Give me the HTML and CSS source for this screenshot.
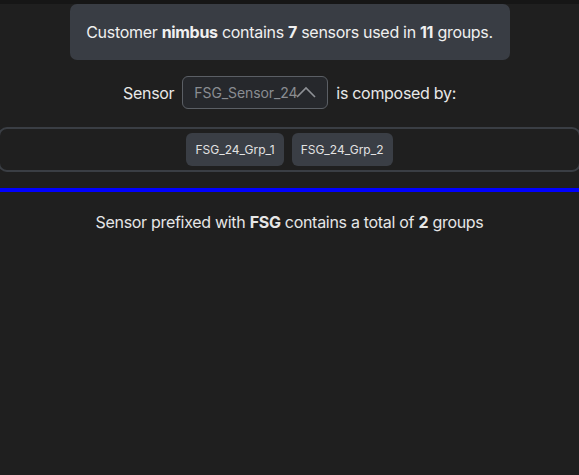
FILE: index.html
```html
<!DOCTYPE html>
<html>
<head>
<meta charset="utf-8">
<link rel="stylesheet" href="styles.css">
</head>
<body>
<div class="topband"></div>
<main class="page">
  <div class="summary"><span>Customer <b>nimbus</b> contains <b>7</b> sensors used in <b>11</b> groups.</span></div>
  <div class="sensor-row">
    <span>Sensor</span>
    <div class="select">
      <span class="select-text">FSG_Sensor_24</span>
      <svg class="chev" width="20" height="12" viewBox="0 0 20 12"><path d="M1 11 L10 2 L19 11" fill="none" stroke="#8e9196" stroke-width="1.6"/></svg>
    </div>
    <span>is composed by:</span>
  </div>
  <div class="groups">
    <span class="chip">FSG_24_Grp_1</span>
    <span class="chip">FSG_24_Grp_2</span>
  </div>
  <div class="divider"></div>
  <p class="total">Sensor prefixed with <b>FSG</b> contains a total of <b>2</b> groups</p>
</main>
</body>
</html>
```
FILE: styles.css
```css
html, body {
  margin: 0;
  padding: 0;
  background: #1f1f1f;
  color: #e6e6e6;
  font-family: Inter, "Noto Sans", sans-serif;
  font-size: 16px;
  letter-spacing: -0.3px;
  overflow: hidden;
}
.topband {
  height: 4px;
  background: #161616;
}
.page {
  display: flex;
  flex-direction: column;
  align-items: center;
}
.summary {
  width: 440px;
  height: 56px;
  box-sizing: border-box;
  background: #393d44;
  border-radius: 7px;
  display: flex;
  align-items: center;
  justify-content: center;
  color: #f0f0f0;
}
.summary b { font-weight: 700; }
.sensor-row {
  margin-top: 16px;
  display: flex;
  align-items: center;
  gap: 8px;
  color: #e8e8e8;
}
.select {
  width: 146px;
  height: 33px;
  box-sizing: border-box;
  border: 1px solid #5b5f65;
  border-radius: 6px;
  background: #26282c;
  position: relative;
  display: flex;
  align-items: center;
  padding-left: 11px;
  font-size: 14px;
  letter-spacing: -0.1px;
  color: #8a8d92;
}
.chev {
  position: absolute;
  left: 113px;
  top: 9px;
}
.groups {
  margin-top: 18px;
  align-self: stretch;
  margin-left: -2px;
  margin-right: -2px;
  height: 45px;
  box-sizing: border-box;
  border: 2px solid #3a3e44;
  border-radius: 9px;
  display: flex;
  align-items: center;
  justify-content: center;
  gap: 8px;
}
.chip {
  background: #3a3e45;
  border-radius: 6px;
  height: 33px;
  padding: 0 9px;
  display: flex;
  align-items: center;
  font-size: 12px;
  letter-spacing: 0;
  color: #e2e2e2;
}
.divider {
  align-self: stretch;
  height: 4px;
  background: #0000ff;
  margin-top: 16px;
}
.total {
  margin: 20px 0 0;
  color: #e6e6e6;
}
```
